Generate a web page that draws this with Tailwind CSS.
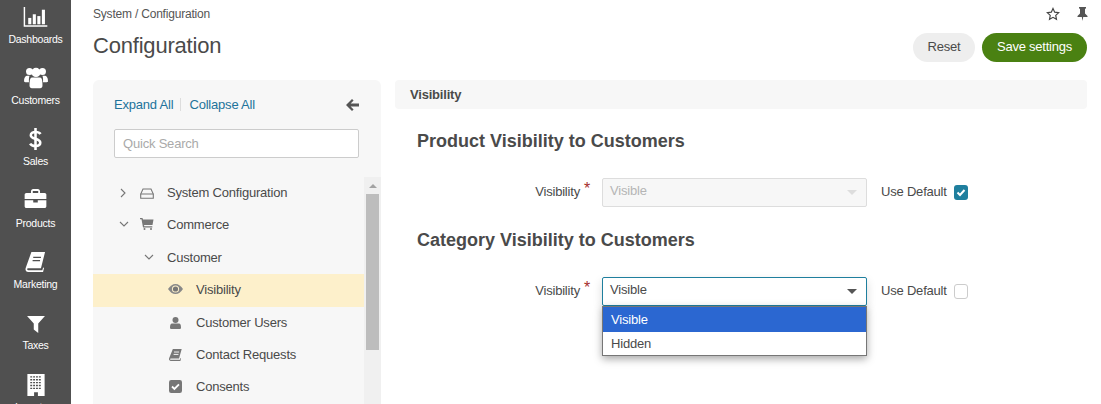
<!DOCTYPE html>
<html lang="en">
<head>
    <meta charset="UTF-8">
    <title>Configuration</title>
    <script src="https://cdn.jsdelivr.net/npm/@tailwindcss/browser@4"></script>
</head>
<body class="h-[404px] overflow-hidden bg-white font-['Liberation_Sans',Arial,sans-serif] text-[#4a4a4a]">
<div class="flex h-[404px] overflow-hidden">
    <!-- main menu -->
    <nav class="w-[71px] h-[404px] shrink-0 overflow-hidden bg-[#505050] text-white text-[10.5px] tracking-[-0.25px] leading-[14px] text-center pt-[4px]">
        <div class="h-[61.4px] flex flex-col items-center">
            <div class="h-[27.5px] flex items-end pb-[4.5px]">
                <svg width="25" height="20" viewBox="0 0 26 22" fill="#fff"><path d="M0 0h1.600v20H26v1.600H0z"/><rect x="5" y="12" width="3.400" height="7"/><rect x="10" y="8" width="3.400" height="11"/><rect x="15" y="10" width="3.400" height="9"/><rect x="20" y="3" width="3.400" height="16"/></svg>
            </div>
            <span>Dashboards</span>
        </div>
        <div class="h-[61.4px] flex flex-col items-center">
            <div class="h-[27.5px] flex items-end pb-[3.9px]">
                <svg width="24" height="22" viewBox="0 0 26 23" fill="#fff"><circle cx="6" cy="4.500" r="3.800"/><circle cx="20" cy="4.500" r="3.800"/><circle cx="13" cy="5.500" r="5"/><path d="M0 15c0-4 1.500-6 3.500-6h2.500c-.6 1.500-.8 4-.6 7H1.500C.5 16 0 15.500 0 15zM26 15c0-4-1.500-6-3.500-6H20c.6 1.500.8 4 .6 7h3.900c1 0 1.500-.5 1.500-1z"/><path d="M8.500 11h9c1.800 0 2.500 3 2.500 8.500 0 2-1 3-2.500 3h-9C7 22.500 6 21.500 6 19.500 6 14 6.700 11 8.500 11z"/></svg>
            </div>
            <span>Customers</span>
        </div>
        <div class="h-[61.4px] flex flex-col items-center">
            <div class="h-[27.5px] flex items-end pb-[4.3px]">
                <svg width="13" height="22" viewBox="0 0 14 24" fill="none" stroke="#fff" stroke-width="2.800"><path d="M12.500 6.500C11.500 5 9.500 4.300 7 4.300 4 4.300 1.900 5.600 1.900 7.800c0 5 10.300 3 10.300 8.400 0 2.300-2.300 3.500-5.200 3.500-2.700 0-4.900-.9-5.900-2.700"/><path d="M7 0v24"/></svg>
            </div>
            <span>Sales</span>
        </div>
        <div class="h-[61.4px] flex flex-col items-center">
            <div class="h-[27.5px] flex items-end pb-[7.7px]">
                <svg width="23" height="19" viewBox="0 0 24 21" fill="#fff"><path d="M7 5V2.500C7 1.200 8 0 9.500 0h5C16 0 17 1.200 17 2.500V5h-2V2.200H9V5z"/><path d="M2 4.500h20c1.200 0 2 .8 2 2V11H0V6.500c0-1.200.8-2 2-2z"/><path d="M0 12.500h9.500V15h5v-2.500H24V19c0 1.200-.8 2-2 2H2c-1.200 0-2-.8-2-2z"/></svg>
            </div>
            <span>Products</span>
        </div>
        <div class="h-[61.4px] flex flex-col items-center">
            <div class="h-[27.5px] flex items-end pb-[5.1px]">
                <svg width="21" height="20" viewBox="0 0 22 22"><path d="M6.500 0H21.500L17 18H3C1.500 18 1.500 20 3 20h15.500l.9-3 1 .5-1.100 4.500H3c-2.500 0-3.500-2-2.800-4.500z" fill="#fff"/><path d="M8.500 6H17M7.800 9.500H16" stroke="#505050" stroke-width="1.400"/></svg>
            </div>
            <span>Marketing</span>
        </div>
        <div class="h-[61.4px] flex flex-col items-center">
            <div class="h-[27.5px] flex items-end pb-[5.5px]">
                <svg width="18" height="17" viewBox="0 0 20 19" fill="#fff"><path d="M0 0h20l-7.500 8.500V19L7.500 15V8.500z"/></svg>
            </div>
            <span>Taxes</span>
        </div>
        <div class="h-[61.4px] flex flex-col items-center">
            <div class="h-[27.5px] flex items-end pb-[3.9px]">
                <svg width="18" height="22" viewBox="0 0 18 23"><path d="M0 0h18v23H11v-4H7v4H0z" fill="#fff"/><path d="M3 3h12M3 6h12M3 9h12M3 12h12M3 15h12" stroke="#505050" stroke-width="1.500" stroke-dasharray="2 1"/></svg>
            </div>
            <span>Inventory</span>
        </div>
    </nav>

    <main class="flex-1 min-w-0 pl-[22px] pr-[14px]">
        <!-- page header -->
        <div class="h-[80px] flex justify-between">
            <div>
                <div class="text-[12px] tracking-[-0.2px] leading-[14px] mt-[7px] text-[#555]">System / Configuration</div>
                <h1 class="text-[22px] tracking-[-0.2px] leading-[26px] mt-[12px] text-[#4a4a4a]">Configuration</h1>
            </div>
            <div class="flex flex-col items-end">
                <div class="flex items-center gap-[17px] mt-[7px] h-[14px] -mr-[1px]">
                    <svg width="14" height="14" viewBox="0 0 24 24" fill="none" stroke="#444" stroke-width="2"><path d="M12 2.500l2.900 6.300 6.800.8-5 4.700 1.300 6.800-6-3.400-6 3.400 1.300-6.800-5-4.700 6.800-.8z"/></svg>
                    <svg width="11" height="14" viewBox="0 0 11 14" fill="#555"><path d="M2 0h7v1.200L8 2v4.500l2.500 2.500v1H6.200L5.500 14l-.7-4H.5V9L3 6.500V2L2 1.200z"/></svg>
                </div>
                <div class="flex gap-[7px] mt-[12px]">
                    <button class="h-[29px] w-[62px] pb-[1px] rounded-full bg-[#eeeeee] text-[13px] tracking-[-0.2px] text-[#4a4a4a]">Reset</button>
                    <button class="h-[29px] w-[105px] pb-[1px] rounded-full bg-[#4a8112] text-[13px] tracking-[-0.25px] text-white">Save settings</button>
                </div>
            </div>
        </div>

        <div class="flex gap-[14px]">
            <!-- tree panel -->
            <aside class="w-[288px] h-[340px] shrink-0 bg-[#f7f7f7] rounded-t-[6px] overflow-hidden text-[13px] tracking-[-0.2px]">
                <div class="pl-[21px] pt-[17px] pr-[22px]">
                    <div class="flex items-center h-[15px] text-[#22739b]">
                        <span class="pr-[7px] border-r border-[#ddd] leading-[13px]">Expand All</span>
                        <span class="pl-[8px]">Collapse All</span>
                        <svg class="ml-auto" width="13" height="12" viewBox="0 0 13 12" fill="#555"><path d="M6 0l1.600 1.600-3 3H13v2.800H4.600l3 3L6 12 0 6z"/></svg>
                    </div>
                    <div class="mt-[17px] h-[29px] bg-white border border-[#ccc] rounded-[2px] px-[8px] flex items-center text-[#aaa]">Quick Search</div>
                </div>
                <div class="flex mt-[19px]">
                    <ul class="w-[271px] text-[#4a4a4a]">
                        <li class="h-[32.3px] flex items-center pl-[27px]">
                            <svg width="7" height="10" viewBox="0 0 7 10" fill="none" stroke="#777" stroke-width="1.100"><path d="M1 1l4 4-4 4"/></svg>
                            <svg class="ml-[13px]" width="14" height="11" viewBox="0 0 14 11" fill="none" stroke="#777" stroke-width="1.100"><path d="M3 1h8l2.300 5v4.300H.7V6z"/><path d="M.7 6h12.600"/></svg>
                            <span class="ml-[13px]">System Configuration</span>
                        </li>
                        <li class="h-[32.3px] pb-[2px] flex items-center pl-[26px]">
                            <svg width="10" height="7" viewBox="0 0 10 7" fill="none" stroke="#777" stroke-width="1.100"><path d="M1 1l4 4 4-4"/></svg>
                            <svg class="ml-[11px]" width="14" height="12" viewBox="0 0 14 12" fill="#777"><path d="M0 0h2.500l.5 1.500h10.500l-1 5.500H4l.3 1.300h8V9.500H3L1.500 1.200H0z"/><circle cx="4.500" cy="11" r="1"/><circle cx="11" cy="11" r="1"/></svg>
                            <span class="ml-[13px]">Commerce</span>
                        </li>
                        <li class="h-[32.3px] flex items-center pl-[51px]">
                            <svg width="10" height="7" viewBox="0 0 10 7" fill="none" stroke="#777" stroke-width="1.100"><path d="M1 1l4 4 4-4"/></svg>
                            <span class="ml-[13px]">Customer</span>
                        </li>
                        <li class="h-[33px] pb-[2px] flex items-center pl-[75px] bg-[#fdf0cb]">
                            <svg width="15" height="10" viewBox="0 0 15 10"><path d="M0 5c2-3 4.500-5 7.500-5S13 2 15 5c-2 3-4.500 5-7.500 5S2 8 0 5z" fill="#888"/><circle cx="7.500" cy="5" r="3.600" fill="#fdf0cb"/><circle cx="7.500" cy="5" r="2.600" fill="#777"/></svg>
                            <span class="ml-[13px]">Visibility</span>
                        </li>
                        <li class="h-[32px] flex items-center pl-[77px]">
                            <svg width="11" height="12" viewBox="0 0 11 12" fill="#777"><circle cx="5.500" cy="3" r="3"/><path d="M2 6.500h7c1.300 0 2 1.500 2 4 0 1-.6 1.500-1.500 1.500h-8C.6 12 0 11.500 0 10.500c0-2.500.7-4 2-4z"/></svg>
                            <span class="ml-[15px]">Customer Users</span>
                        </li>
                        <li class="h-[32.3px] flex items-center pl-[76px]">
                            <svg width="13" height="12" viewBox="0 0 22 20" fill="#777"><path d="M6.500 0H21.500L17 16H3C1.500 16 1.500 18 3 18h15.500l.9-3 1 .5-1.100 4.500H3c-2.500 0-3.500-2-2.800-4.500z"/><path d="M8.500 5H17M7.800 9H16" stroke="#f7f7f7" stroke-width="1.600"/></svg>
                            <span class="ml-[14px]">Contact Requests</span>
                        </li>
                        <li class="h-[32.3px] pb-[2px] flex items-center pl-[76px]">
                            <svg width="13" height="13" viewBox="0 0 12 12"><rect width="12" height="12" rx="2" fill="#777"/><path d="M2.800 6l2.200 2.200 4.200-4.200" fill="none" stroke="#fff" stroke-width="1.700"/></svg>
                            <span class="ml-[14px]">Consents</span>
                        </li>
                    </ul>
                    <!-- tree scrollbar -->
                    <div class="w-[17px] h-[240px] bg-[#f0f0f0] flex flex-col items-center">
                        <div class="h-[17px] flex items-center">
                            <div class="w-0 h-0 border-x-[4px] border-x-transparent border-b-[4px] border-b-[#a3a3a3]"></div>
                        </div>
                        <div class="w-[13px] h-[156px] bg-[#bdbdbd]"></div>
                    </div>
                </div>
            </aside>

            <!-- form -->
            <section class="flex-1 min-w-0 text-[13px] tracking-[-0.2px]">
                <div class="h-[29px] bg-[#f7f7f7] rounded-[4px] px-[15px] flex items-center font-bold text-[#4a4a4a]">Visibility</div>
                <h2 class="mt-[22px] ml-[22px] text-[18px] tracking-normal leading-[20px] font-bold text-[#4a4a4a]">Product Visibility to Customers</h2>
                <div class="flex items-center mt-[27px] h-[29px]">
                    <div class="w-[196px] flex justify-end -mt-[1px]"><span>Visibility</span><span class="text-[#a5302c] text-[16px] leading-[14px] ml-[4px] mr-[1px]">*</span></div>
                    <div class="ml-[11px] w-[265px] h-[29px] bg-[#f7f7f7] border border-[#ddd] rounded-[2px] flex items-center justify-between pl-[7px] pr-[9px] text-[#b5b5b5]">
                        <span class="-mt-[3px]">Visible</span>
                        <div class="w-0 h-0 border-x-[5px] border-x-transparent border-t-[5px] border-t-[#ddd]"></div>
                    </div>
                    <span class="ml-[14px] -mt-[1px]">Use Default</span>
                    <div class="ml-[7px] w-[14px] h-[15px] rounded-[3px] bg-[#1f7f9e] flex items-center justify-center">
                        <svg width="10" height="9" viewBox="0 0 10 9" fill="none" stroke="#fff" stroke-width="2"><path d="M1.500 4.500l2.500 2.500 4.500-5"/></svg>
                    </div>
                </div>
                <h2 class="mt-[23px] ml-[22px] text-[18px] tracking-normal leading-[20px] font-bold text-[#4a4a4a]">Category Visibility to Customers</h2>
                <div class="flex items-center mt-[27px] h-[29px]">
                    <div class="w-[196px] flex justify-end -mt-[1px]"><span>Visibility</span><span class="text-[#a5302c] text-[16px] leading-[14px] ml-[4px] mr-[1px]">*</span></div>
                    <div class="relative ml-[11px] w-[265px] h-[29px] bg-white border border-[#1f7f9e] rounded-[2px] flex items-center justify-between pl-[7px] pr-[9px] shadow-[0_4px_10px_rgba(0,0,0,0.15)]">
                        <span class="-mt-[3px]">Visible</span>
                        <div class="w-0 h-0 border-x-[5px] border-x-transparent border-t-[5px] border-t-[#555]"></div>
                        <!-- open dropdown -->
                        <ul class="absolute left-[-1px] top-[28px] w-[265px] h-[50px] bg-white border border-[#767676] shadow-[0_3px_8px_rgba(0,0,0,0.35)]">
                            <li class="h-[25px] bg-[#2b67d1] text-white pl-[8px] flex items-center">Visible</li>
                            <li class="h-[23px] pl-[8px] flex items-center">Hidden</li>
                        </ul>
                    </div>
                    <span class="ml-[14px] -mt-[1px]">Use Default</span>
                    <div class="ml-[7px] w-[14px] h-[15px] rounded-[3px] bg-white border border-[#ccc]"></div>
                </div>
            </section>
        </div>
    </main>
</div>
</body>
</html>
